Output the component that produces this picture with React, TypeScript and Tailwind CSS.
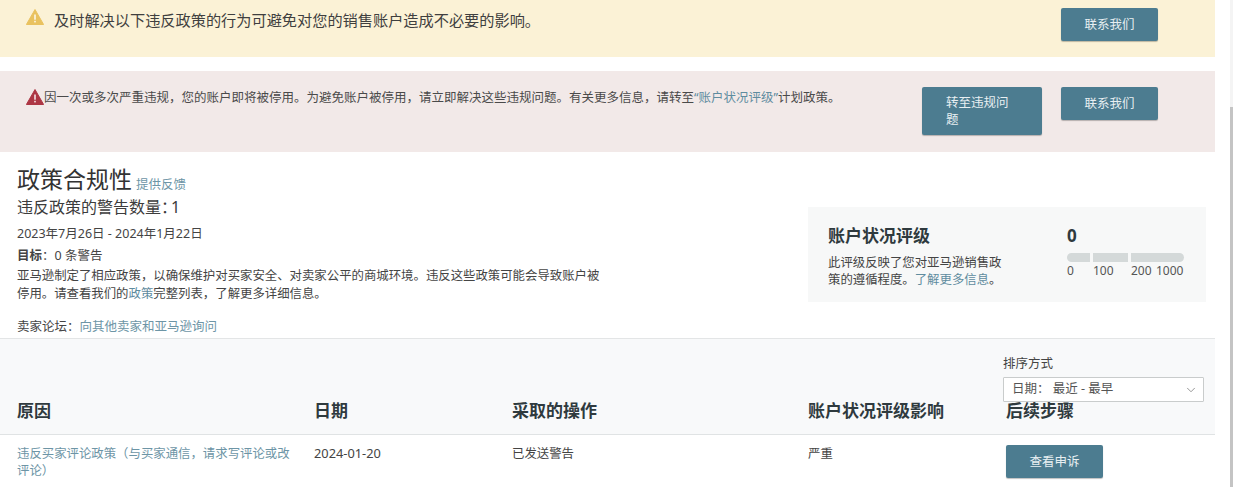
import { ChevronDown } from "lucide-react";

function Warning({ color, className }: { color: string; className: string }) {
  return (
    <svg viewBox="0 0 18 16" className={className}>
      <path d="M9 0.5 L17.6 15.5 L0.4 15.5 Z" fill={color} stroke={color} strokeLinejoin="round" />
      <rect x="8.2" y="5.5" width="1.6" height="5.2" fill="#fff" opacity="0.85" />
      <rect x="8.2" y="11.8" width="1.6" height="1.6" fill="#fff" opacity="0.85" />
    </svg>
  );
}

function TealButton({ label, className }: { label: string; className: string }) {
  return (
    <button className={`bg-[#4c7c90] text-[#e8eff2] text-[12.5px] leading-[17px] rounded-[2px] shadow-[0_1px_1px_rgba(0,0,0,0.25)] ${className}`}>
      {label}
    </button>
  );
}

export default function App() {
  return (
    <div
      className="w-[1233px] h-[487px] overflow-hidden flex bg-white text-[#444] text-[12.5px]"
      style={{ fontFamily: '"Noto Sans", "Noto Sans CJK SC", sans-serif' }}
    >
      <div className="w-[1215px] shrink-0">
        {/* yellow banner */}
        <div className="h-[57px] bg-[#fbf2d6] flex items-start pl-[26px] pr-[57px]">
          <Warning color="#e9c25f" className="w-[18px] h-[16px] mt-[9px] shrink-0" />
          <div className="ml-[10px] mt-[9px] text-[15.2px] leading-[22px] text-[#3f3f3f] flex-1">
            及时解决以下违反政策的行为可避免对您的销售账户造成不必要的影响。
          </div>
          <TealButton label="联系我们" className="w-[97px] h-[33px] mt-[8px]" />
        </div>

        {/* red banner */}
        <div className="h-[81px] mt-[14px] bg-[#f2e9e8] flex items-start pl-[26px] pr-[57px]">
          <Warning color="#ad3644" className="w-[18px] h-[16px] mt-[18px] shrink-0" />
          <div className="mt-[18px] text-[12.5px] leading-[18px] text-[#4a4a4a] flex-1 whitespace-nowrap">
            因一次或多次严重违规，您的账户即将被停用。为避免账户被停用，请立即解决这些违规问题。有关更多信息，请转至
            <span className="text-[#5f8c9f]">“账户状况评级”</span>计划政策。
          </div>
          <TealButton label="转至违规问题" className="w-[120px] h-[48px] mt-[16px] mr-[19px] px-[24px] text-left" />
          <TealButton label="联系我们" className="w-[97px] h-[33px] mt-[16px]" />
        </div>

        {/* policy compliance */}
        <div className="h-[187px] border-b border-[#e3e5e6] flex pl-[17px] pr-[9px]">
          <div className="flex-1">
            <div className="flex items-end mt-[11px] h-[33px]">
              <span className="text-[23px] leading-[33px] text-[#333]">政策合规性</span>
              <span className="ml-[4px] text-[12.5px] leading-[18px] mb-[2px] text-[#6d95a6]">提供反馈</span>
            </div>
            <div className="text-[16px] leading-[22px] text-[#3c3c3c]">
              违反政策的警告数量：<span className="-ml-[6px]">1</span>
            </div>
            <div className="mt-[7px] leading-[18px]">2023年7月26日 - 2024年1月22日</div>
            <div className="mt-[4px] leading-[18px]">
              <span className="font-bold">目标</span>：0 条警告
            </div>
            <div className="mt-[2px] w-[590px] text-[12.4px] leading-[18px]">
              亚马逊制定了相应政策，以确保维护对买家安全、对卖家公平的商城环境。违反这些政策可能会导致账户被停用。请查看我们的
              <span className="text-[#5f8c9f]">政策</span>完整列表，了解更多详细信息。
            </div>
            <div className="mt-[15px] leading-[18px]">
              卖家论坛：<span className="text-[#6d95a6]">向其他卖家和亚马逊询问</span>
            </div>
          </div>

          {/* account health card */}
          <div className="w-[398px] h-[95px] mt-[55px] bg-[#f7f8f8] flex pl-[20px]">
            <div className="w-[239px]">
              <div className="mt-[18px] text-[17px] leading-[22px] font-bold text-[#2f3a3e]">账户状况评级</div>
              <div className="mt-[7px] w-[176px] text-[12.4px] leading-[17px]">
                此评级反映了您对亚马逊销售政策的遵循程度。<span className="text-[#5f8c9f]">了解更多信息</span>。
              </div>
            </div>
            <div className="w-[117px]">
              <div className="mt-[18px] text-[17px] leading-[22px] font-bold text-[#2f3a3e]">0</div>
              <div className="mt-[6px] flex gap-[3px] h-[9px]">
                <div className="w-[23px] bg-[#d4d9d9] rounded-l-full" />
                <div className="w-[35px] bg-[#d4d9d9]" />
                <div className="w-[53px] bg-[#d4d9d9] rounded-r-full" />
              </div>
              <div className="mt-[2px] flex text-[12px] leading-[14px] text-[#555]">
                <span className="w-[26px]">0</span>
                <span className="w-[38px]">100</span>
                <span className="w-[25px]">200</span>
                <span>1000</span>
              </div>
            </div>
          </div>
        </div>

        {/* table header */}
        <div className="h-[96px] bg-[#f8f9fa] border-b border-[#e0e3e4] pt-[16px]">
          <div className="w-[201px] ml-[1003px]">
            <div className="leading-[18px] text-[#444]">排序方式</div>
            <div className="mt-[4px] h-[25px] bg-white border border-[#c9cccc] rounded-[1px] flex items-center justify-between pl-[8px] pr-[5px] text-[#555]">
              <span>日期： 最近 - 最早</span>
              <ChevronDown className="w-[14px] h-[14px] text-[#888]" strokeWidth={1.5} />
            </div>
          </div>
          <div className="grid grid-cols-[297px_198px_296px_198px_1fr] pl-[17px] -mt-[2px] text-[17px] leading-[22px] font-bold text-[#2f3a3e]">
            <div>原因</div>
            <div>日期</div>
            <div>采取的操作</div>
            <div>账户状况评级影响</div>
            <div>后续步骤</div>
          </div>
        </div>

        {/* table row */}
        <div className="grid grid-cols-[297px_198px_296px_198px_1fr] pl-[17px] pt-[10px] text-[12.4px] leading-[17px]">
          <div className="w-[278px] text-[#6d95a6]">违反买家评论政策（与买家通信，请求写评论或改评论）</div>
          <div className="text-[12.8px]">2024-01-20</div>
          <div>已发送警告</div>
          <div>严重</div>
          <div>
            <TealButton label="查看申诉" className="w-[97px] h-[33px]" />
          </div>
        </div>
      </div>

      {/* scrollbar */}
      <div className="flex-1 flex justify-end">
        <div className="w-[3px] h-full flex flex-col">
          <div className="h-[107px] bg-[#f4f4f4]" />
          <div className="flex-1 bg-[#c4c4c4]" />
        </div>
      </div>
    </div>
  );
}
